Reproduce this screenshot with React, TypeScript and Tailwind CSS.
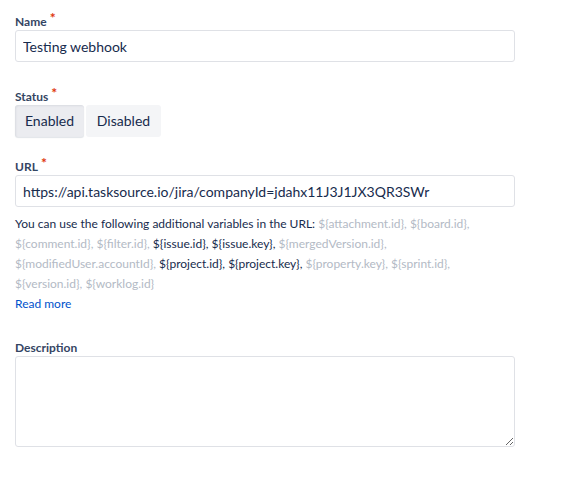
import { useState } from "react";

const vars: { text: string; used: boolean }[] = [
  { text: "${attachment.id}", used: false },
  { text: "${board.id}", used: false },
  { text: "${comment.id}", used: false },
  { text: "${filter.id}", used: false },
  { text: "${issue.id}", used: true },
  { text: "${issue.key}", used: true },
  { text: "${mergedVersion.id}", used: false },
  { text: "${modifiedUser.accountId}", used: false },
  { text: "${project.id}", used: true },
  { text: "${project.key}", used: true },
  { text: "${property.key}", used: false },
  { text: "${sprint.id}", used: false },
  { text: "${version.id}", used: false },
  { text: "${worklog.id}", used: false },
];

function Label({ text, required }: { text: string; required?: boolean }) {
  return (
    <label className="flex h-4 items-center text-xs font-bold leading-4 text-[#344563]">
      {text}
      {required && <span className="ml-[3px] -mt-[9px] text-[14px] font-bold text-[#de350b]">*</span>}
    </label>
  );
}

export default function App() {
  const [status, setStatus] = useState<"enabled" | "disabled">("enabled");
  const [name, setName] = useState("Testing webhook");
  const [url, setUrl] = useState("https://api.tasksource.io/jira/companyId=jdahx11J3J1JX3QR3SWr");

  return (
    <div className="min-h-[477px] bg-white pl-[15px] pt-[14px] font-['Lato','Open_Sans',sans-serif] text-[#172b4d]">
      <div className="w-[500px]">
        {/* Name */}
        <Label text="Name" required />
        <input
          value={name}
          onChange={(e) => setName(e.target.value)}
          className="h-8 w-full rounded-[3px] border border-[#dfe1e6] bg-white px-[7px] text-sm text-[#172b4d] outline-none"
        />

        {/* Status */}
        <div className="mt-[27px]">
          <Label text="Status" required />
          <div className="flex gap-[2px]">
            <button
              onClick={() => setStatus("enabled")}
              className={
                status === "enabled"
                  ? "h-8 w-[69px] rounded-[3px] bg-[#ebecf0] text-sm text-[#172b4d] shadow-[inset_1px_1px_2px_rgba(9,30,66,0.08),0_1px_1px_rgba(9,30,66,0.12)]"
                  : "h-8 w-[69px] rounded-[3px] bg-[#f4f5f7] text-sm text-[#172b4d]"
              }
            >
              Enabled
            </button>
            <button
              onClick={() => setStatus("disabled")}
              className={
                status === "disabled"
                  ? "h-8 w-[75px] rounded-[3px] bg-[#ebecf0] text-sm text-[#172b4d] shadow-[inset_1px_1px_2px_rgba(9,30,66,0.08),0_1px_1px_rgba(9,30,66,0.12)]"
                  : "h-8 w-[75px] rounded-[3px] bg-[#f4f5f7] text-sm text-[#172b4d]"
              }
            >
              Disabled
            </button>
          </div>
        </div>

        {/* URL */}
        <div className="mt-[22px]">
          <Label text="URL" required />
          <input
            value={url}
            onChange={(e) => setUrl(e.target.value)}
            className="h-8 w-full rounded-[3px] border border-[#dfe1e6] bg-white px-[7px] text-sm text-[#172b4d] outline-none"
          />
          <p className="mt-[7px] w-[470px] text-xs leading-5 text-[#172b4d]">
            You can use the following additional variables in the URL:{" "}
            {vars.map((v, i) => (
              <span key={v.text} className={v.used ? "text-[#172b4d]" : "text-[#b3bac5]"}>
                {v.text}
                {i < vars.length - 1 && ", "}
              </span>
            ))}
          </p>
          <a href="#" className="block text-xs leading-5 text-[#0052cc]">
            Read more
          </a>
        </div>

        {/* Description */}
        <div className="mt-[26px]">
          <Label text="Description" />
          <textarea className="block h-[91px] w-full rounded-[3px] border border-[#dfe1e6] bg-white px-[7px] py-[5px] text-sm outline-none" />
        </div>
      </div>
    </div>
  );
}
